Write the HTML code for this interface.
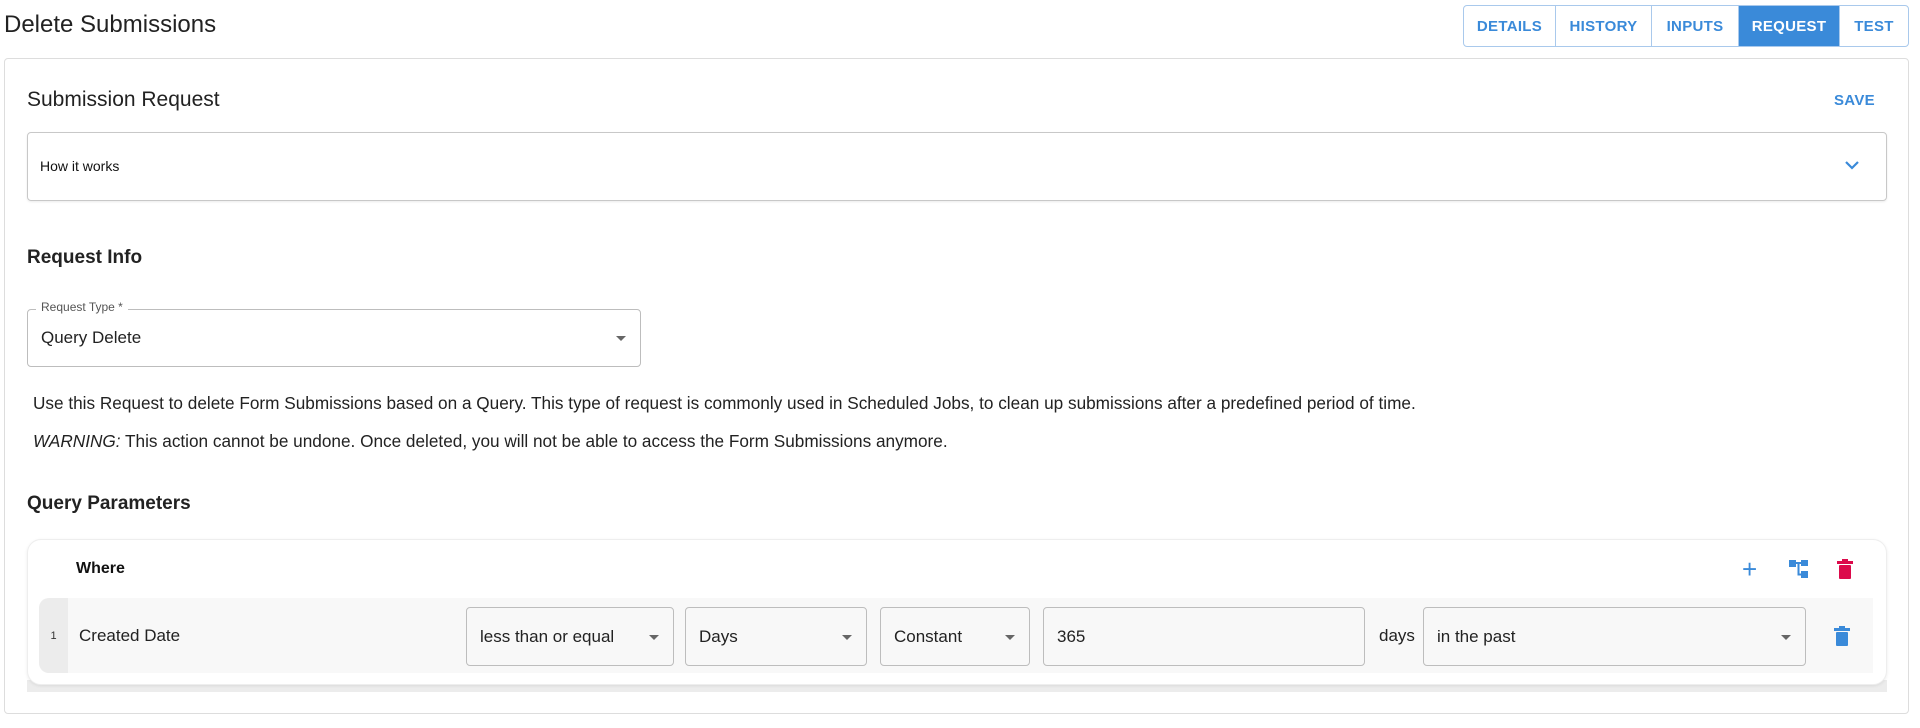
<!DOCTYPE html>
<html><head><style>
*{box-sizing:border-box;margin:0;padding:0}
body{width:1920px;height:728px;background:#fff;font-family:"Liberation Sans",sans-serif;color:#222;position:relative;overflow:hidden}
.a{position:absolute}
.tabs{left:1463px;top:5px;width:446px;height:42px;border:1px solid #a9c9ec;border-radius:4px;display:flex;overflow:hidden}
.tabs div{display:flex;align-items:center;justify-content:center;color:#3a8ad9;font-size:15px;font-weight:bold;letter-spacing:.3px;border-right:1px solid #a9c9ec}
.tabs div:last-child{border-right:none}
.box{border:1px solid #c8c8c8;border-radius:4px}
.sel{border:1px solid #bdbdbd;border-radius:4px;font-size:16px;display:flex;align-items:center;padding-left:13px;color:#222}
.arr{position:absolute;right:14px;top:50%;margin-top:-2px;width:0;height:0;border-left:5px solid transparent;border-right:5px solid transparent;border-top:5px solid #666}
</style></head><body>
<div class="a" style="left:4px;top:11px;font-size:24px;color:#222">Delete Submissions</div>
<div class="a tabs">
<div style="width:92px">DETAILS</div><div style="width:96px">HISTORY</div><div style="width:87px">INPUTS</div><div style="width:101px;background:#3a8ad9;color:#fff">REQUEST</div><div style="flex:1">TEST</div>
</div>
<div class="a" style="left:4px;top:58px;width:1905px;height:656px;border:1px solid #ddd;border-radius:4px"></div>
<div class="a" style="left:27px;top:88px;font-size:21px">Submission Request</div>
<div class="a" style="left:1834px;top:92px;font-size:15px;color:#3a8ad9;font-weight:bold;letter-spacing:.3px">SAVE</div>
<div class="a box" style="left:27px;top:132px;width:1860px;height:69px;box-shadow:0 1px 2px rgba(0,0,0,.08)"></div>
<div class="a" style="left:40px;top:158px;font-size:14px;color:#111">How it works</div>
<svg class="a" style="left:1843px;top:159px" width="18" height="12" viewBox="0 0 18 12"><path d="M3 3l6 6 6-6" fill="none" stroke="#3a8ad9" stroke-width="2.2"/></svg>
<div class="a" style="left:27px;top:247px;font-size:19px;font-weight:bold">Request Info</div>
<div class="a sel" style="left:27px;top:309px;width:614px;height:58px;font-size:17px">Query Delete<div class="arr"></div></div>
<div class="a" style="left:36px;top:300px;font-size:12px;color:#555;background:#fff;padding:0 5px">Request Type *</div>
<div class="a" style="left:33px;top:393px;font-size:17.2px">Use this Request to delete Form Submissions based on a Query. This type of request is commonly used in Scheduled Jobs, to clean up submissions after a predefined period of time.</div>
<div class="a" style="left:33px;top:431px;font-size:17.2px"><i>WARNING:</i> This action cannot be undone. Once deleted, you will not be able to access the Form Submissions anymore.</div>
<div class="a" style="left:27px;top:493px;font-size:19px;font-weight:bold">Query Parameters</div>
<div class="a" style="left:27px;top:680px;width:1860px;height:12px;background:#ececec"></div>
<div class="a" style="left:27px;top:539px;width:1860px;height:146px;background:#fff;border:1px solid #eee;border-radius:14px;box-shadow:0 1px 3px rgba(0,0,0,.08)"></div>
<div class="a" style="left:76px;top:560px;font-size:16px;font-weight:bold;color:#111">Where</div>
<div class="a" style="left:1742px;top:559px;font-size:26px;line-height:20px;color:#3a8ad9">+</div>
<svg class="a" style="left:1788px;top:558px" width="22" height="22" viewBox="0 0 22 22"><rect x="1" y="2" width="7" height="7" fill="#3a8ad9"/><rect x="13" y="2" width="7" height="6" fill="#3a8ad9"/><rect x="13" y="13" width="7" height="7" fill="#3a8ad9"/><path d="M8 5h5M10.5 5v11.5h2.5" stroke="#3a8ad9" stroke-width="2" fill="none"/></svg>
<svg class="a" style="left:1836px;top:558px" width="18" height="22" viewBox="0 0 18 22"><rect x="1" y="3" width="16" height="3" fill="#dc0a4b"/><rect x="6" y="1" width="6" height="3" fill="#dc0a4b"/><rect x="3" y="7" width="12" height="14" rx="1" fill="#dc0a4b"/></svg>
<div class="a" style="left:39px;top:598px;width:1834px;height:75px;background:#f8f8f8;border-radius:10px 0 0 10px"></div>
<div class="a" style="left:39px;top:598px;width:29px;height:75px;background:#ececec;border-radius:10px 0 0 10px;font-size:11px;color:#333;display:flex;align-items:center;justify-content:center">1</div>
<div class="a" style="left:79px;top:626px;font-size:17px">Created Date</div>
<div class="a sel" style="left:466px;top:607px;width:208px;height:59px;font-size:17px">less than or equal<div class="arr"></div></div>
<div class="a sel" style="left:685px;top:607px;width:182px;height:59px;font-size:17px">Days<div class="arr"></div></div>
<div class="a sel" style="left:880px;top:607px;width:150px;height:59px;font-size:17px">Constant<div class="arr"></div></div>
<div class="a sel" style="left:1043px;top:607px;width:322px;height:59px;font-size:17px">365</div>
<div class="a" style="left:1379px;top:626px;font-size:17px">days</div>
<div class="a sel" style="left:1423px;top:607px;width:383px;height:59px;font-size:17px">in the past<div class="arr"></div></div>
<svg class="a" style="left:1834px;top:625px" width="16" height="22" viewBox="0 0 16 22"><rect x="0" y="3" width="16" height="3" fill="#3a8ad9"/><rect x="5" y="1" width="6" height="3" fill="#3a8ad9"/><rect x="2" y="7" width="12" height="14" rx="1" fill="#3a8ad9"/></svg>
</body></html>
